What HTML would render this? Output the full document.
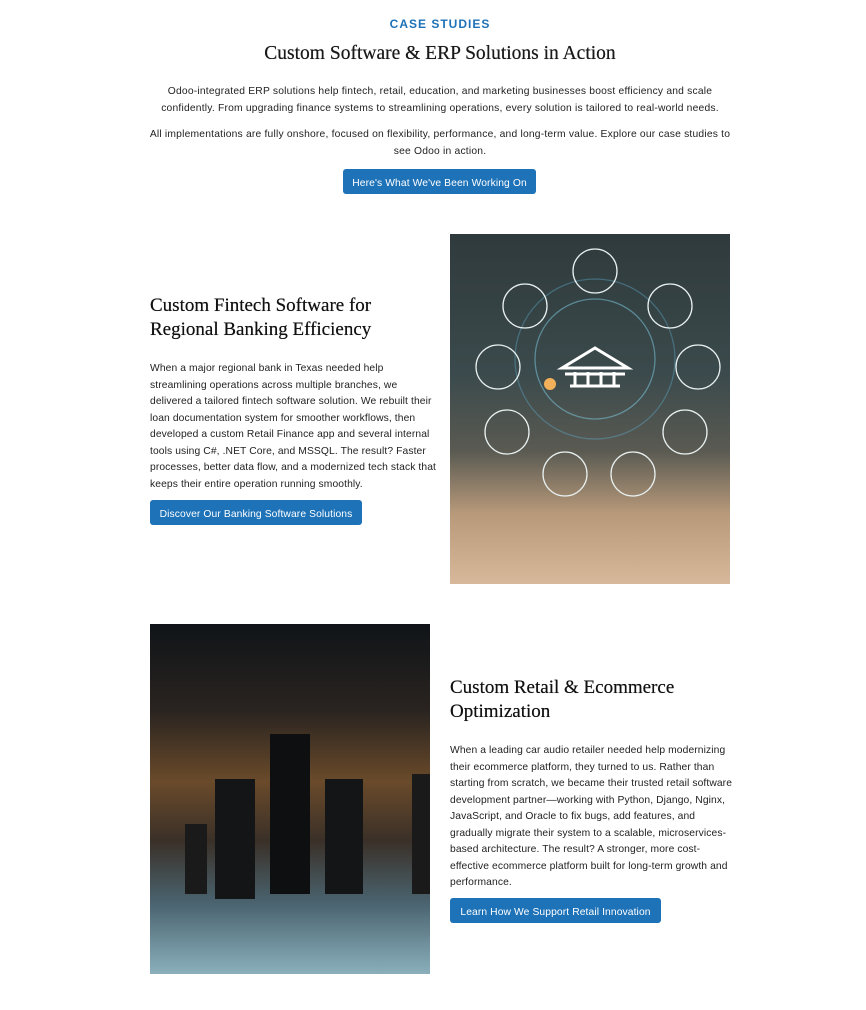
<!DOCTYPE html>
<html><head><meta charset="utf-8"><style>
*{margin:0;padding:0;box-sizing:border-box}
body{width:866px;height:1010px;background:#fff;font-family:"Liberation Sans",sans-serif;color:#1a1a1a;position:relative;overflow:hidden}
.a{position:absolute}
.kick{left:0;width:880px;top:17px;text-align:center;color:#1d72b8;font-size:12px;font-weight:bold;letter-spacing:1px}
.h1{left:0;width:880px;top:43px;text-align:center;font-family:"Liberation Serif",serif;font-size:19.5px}
.p{font-size:10.3px;line-height:16.5px;color:#222;letter-spacing:.1px}
.btn{background:#1d72b8;color:#fff;font-size:10.3px;border-radius:3px;height:25px;line-height:25px;padding-top:2px;text-align:center;letter-spacing:.1px}
.h2{font-family:"Liberation Serif",serif;font-size:19px;line-height:24px;color:#111}
.h1,.h2{font-weight:normal;text-shadow:0 0 .4px #111}
</style></head><body>
<div class="a kick">CASE STUDIES</div>
<div class="a h1">Custom Software &amp; ERP Solutions in Action</div>
<div class="a p" style="left:150px;width:580px;top:84px;text-align:center;letter-spacing:.2px">Odoo-integrated ERP solutions help fintech, retail, education, and marketing businesses boost efficiency and scale confidently. From upgrading finance systems to streamlining operations, every solution is tailored to real-world needs.</div>
<div class="a p" style="left:140px;width:600px;top:127px;text-align:center;letter-spacing:.2px">All implementations are fully onshore, focused on flexibility, performance, and long-term value. Explore our case studies to see Odoo in action.</div>
<div class="a btn" style="left:343px;top:169px;width:193px">Here's What We've Been Working On</div>

<div class="a h2" style="left:150px;top:294px;width:290px">Custom Fintech Software for Regional Banking Efficiency</div>
<div class="a p" style="left:150px;top:361px;width:288px">When a major regional bank in Texas needed help streamlining operations across multiple branches, we delivered a tailored fintech software solution. We rebuilt their loan documentation system for smoother workflows, then developed a custom Retail Finance app and several internal tools using C#, .NET Core, and MSSQL. The result? Faster processes, better data flow, and a modernized tech stack that keeps their entire operation running smoothly.</div>
<div class="a btn" style="left:150px;top:500px;width:212px">Discover Our Banking Software Solutions</div>

<div class="a" style="left:450px;top:234px;width:280px;height:350px;overflow:hidden;background:linear-gradient(180deg,#2f3a3c 0%,#3b4a4c 40%,#5a5a52 62%,#b89a7a 80%,#d8b89a 100%)">
<svg width="280" height="350" fill="none" stroke="#e8f0f0" stroke-width="1.3">
<circle cx="145" cy="125" r="80" stroke="#5fb0d0" opacity=".4"/>
<circle cx="145" cy="125" r="60" stroke="#7fd0e8" opacity=".5"/>
<circle cx="145" cy="37" r="22"/><circle cx="220" cy="72" r="22"/><circle cx="75" cy="72" r="22"/>
<circle cx="48" cy="133" r="22"/><circle cx="248" cy="133" r="22"/><circle cx="57" cy="198" r="22"/>
<circle cx="235" cy="198" r="22"/><circle cx="115" cy="240" r="22"/><circle cx="183" cy="240" r="22"/>
<path d="M115 140h60M120 152h50M125 138v14M138 138v14M151 138v14M164 138v14M112 134l33-20 33 20z" stroke="#fff" stroke-width="3"/>
<circle cx="100" cy="150" r="6" fill="#f2b05a" stroke="none"/>
</svg></div>

<div class="a" style="left:150px;top:624px;width:280px;height:350px;overflow:hidden;background:linear-gradient(180deg,#101418 0%,#2a2420 25%,#6a4a2a 45%,#3a3028 62%,#4a6470 80%,#8ab0bc 100%)">
<div class="a" style="left:120px;top:110px;width:40px;height:160px;background:#0e0f10"></div>
<div class="a" style="left:65px;top:155px;width:40px;height:120px;background:#141516"></div>
<div class="a" style="left:175px;top:155px;width:38px;height:115px;background:#141516"></div>
<div class="a" style="left:35px;top:200px;width:22px;height:70px;background:#1a1a1a"></div>
<div class="a" style="left:262px;top:150px;width:18px;height:120px;background:#1a1a1a"></div>
</div>

<div class="a h2" style="left:450px;top:676px;width:290px">Custom Retail &amp; Ecommerce Optimization</div>
<div class="a p" style="left:450px;top:743px;width:288px">When a leading car audio retailer needed help modernizing their ecommerce platform, they turned to us. Rather than starting from scratch, we became their trusted retail software development partner—working with Python, Django, Nginx, JavaScript, and Oracle to fix bugs, add features, and gradually migrate their system to a scalable, microservices-based architecture. The result? A stronger, more cost-effective ecommerce platform built for long-term growth and performance.</div>
<div class="a btn" style="left:450px;top:898px;width:211px">Learn How We Support Retail Innovation</div>
</body></html>
